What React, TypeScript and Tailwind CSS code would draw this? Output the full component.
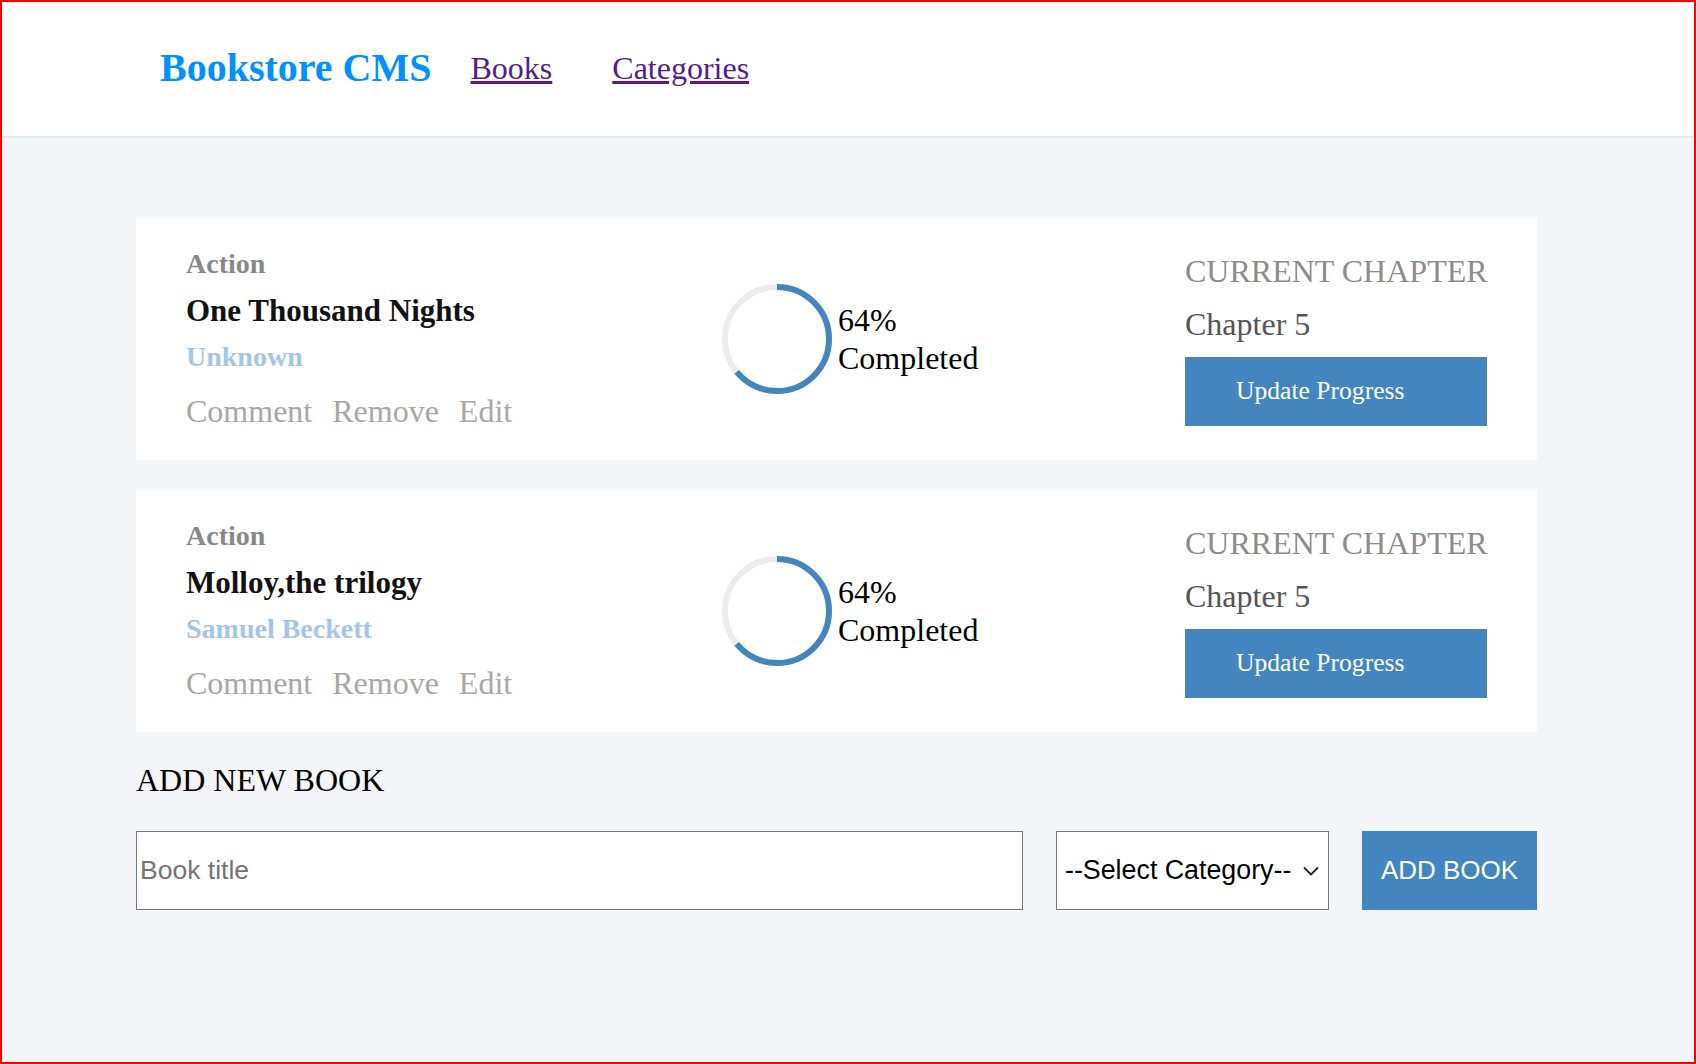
import React from "react";

const books = [
  { category: "Action", title: "One Thousand Nights", author: "Unknown" },
  { category: "Action", title: "Molloy,the trilogy", author: "Samuel Beckett" },
];

function Progress() {
  const r = 52;
  const c = 2 * Math.PI * r;
  return (
    <div className="flex items-center">
      <svg width="110" height="110" viewBox="0 0 110 110">
        <circle cx="55" cy="55" r={r} fill="none" stroke="#ececec" strokeWidth="6" />
        <circle
          cx="55"
          cy="55"
          r={r}
          fill="none"
          stroke="#4386bf"
          strokeWidth="6"
          strokeDasharray={`${c * 0.64} ${c}`}
          transform="rotate(-90 55 55)"
        />
      </svg>
      <div className="ml-[6px] text-[32px] leading-[38px] text-black">
        <div>64%</div>
        <div>Completed</div>
      </div>
    </div>
  );
}

function BookCard({ category, title, author }: { category: string; title: string; author: string }) {
  return (
    <div className="bg-white h-[242px] w-[1401px] flex items-center px-[50px]">
      <div className="w-[536px] flex flex-col">
        <div className="text-[28px] font-bold text-[#888888] leading-[32px]">{category}</div>
        <div className="mt-[13px] text-[31px] font-bold text-[#121212] leading-[36px]">{title}</div>
        <div className="mt-[12px] text-[28px] font-bold text-[#a4c6e6] leading-[32px]">{author}</div>
        <div className="mt-[20px] flex gap-[20px] text-[32px] text-[#a9a6a4] leading-[37px]">
          <span>Comment</span>
          <span>Remove</span>
          <span>Edit</span>
        </div>
      </div>
      <Progress />
      <div className="ml-auto flex flex-col w-[302px]">
        <div className="text-[32px] text-[#8c8c8c] leading-[37px] whitespace-nowrap">CURRENT CHAPTER</div>
        <div className="mt-[16px] text-[32px] text-[#555555] leading-[37px]">Chapter 5</div>
        <button className="mt-[14px] h-[69px] w-full bg-[#4386bf] text-white text-[25.6px] text-left pl-[51px] font-['Liberation_Serif',serif]">
          Update Progress
        </button>
      </div>
    </div>
  );
}

export default function App() {
  return (
    <div className="w-[1696px] h-[1064px] border-2 border-[#ff0000] bg-[#f4f5f9] overflow-hidden font-['Liberation_Serif',serif]">
      <header className="h-[134px] bg-white border-b-2 border-[#e8e8e8] flex items-center pl-[158px] box-content">
        <h1 className="text-[40px] font-bold text-[#0290ff] leading-none -mt-[2px]">Bookstore CMS</h1>
        <nav className="ml-[39px] flex gap-[60px] text-[32px] -mt-[2px]">
          <a href="#" className="text-[#551a8b] underline">Books</a>
          <a href="#" className="text-[#551a8b] underline">Categories</a>
        </nav>
      </header>
      <main className="pl-[134px] pt-[80px]">
        <div className="flex flex-col gap-[30px]">
          {books.map((b) => (
            <BookCard key={b.title} {...b} />
          ))}
        </div>
        <h2 className="mt-[31px] text-[32px] text-black leading-[35px]">ADD NEW BOOK</h2>
        <form className="mt-[33px] flex w-[1401px] gap-[33px] h-[79px]" onSubmit={(e) => e.preventDefault()}>
          <input
            type="text"
            placeholder="Book title"
            className="w-[887px] h-full bg-white border border-[#767676] pl-[3px] text-[26.5px] font-['Liberation_Sans',sans-serif] placeholder:text-[#757575] outline-none"
          />
          <div className="relative w-[273px] h-full">
            <select className="appearance-none w-full h-full bg-white border border-[#767676] pl-[8px] text-[26.8px] text-black font-['Liberation_Sans',sans-serif] outline-none">
              <option>--Select Category--</option>
            </select>
            <svg
              className="absolute right-[9px] top-1/2 -translate-y-1/2 pointer-events-none"
              width="18"
              height="11"
              viewBox="0 0 18 11"
            >
              <path d="M2 2 L9 9 L16 2" fill="none" stroke="#222" strokeWidth="1.8" />
            </svg>
          </div>
          <button className="w-[175px] h-full bg-[#4386bf] text-white text-[26px] font-['Liberation_Sans',sans-serif]">
            ADD BOOK
          </button>
        </form>
      </main>
    </div>
  );
}
